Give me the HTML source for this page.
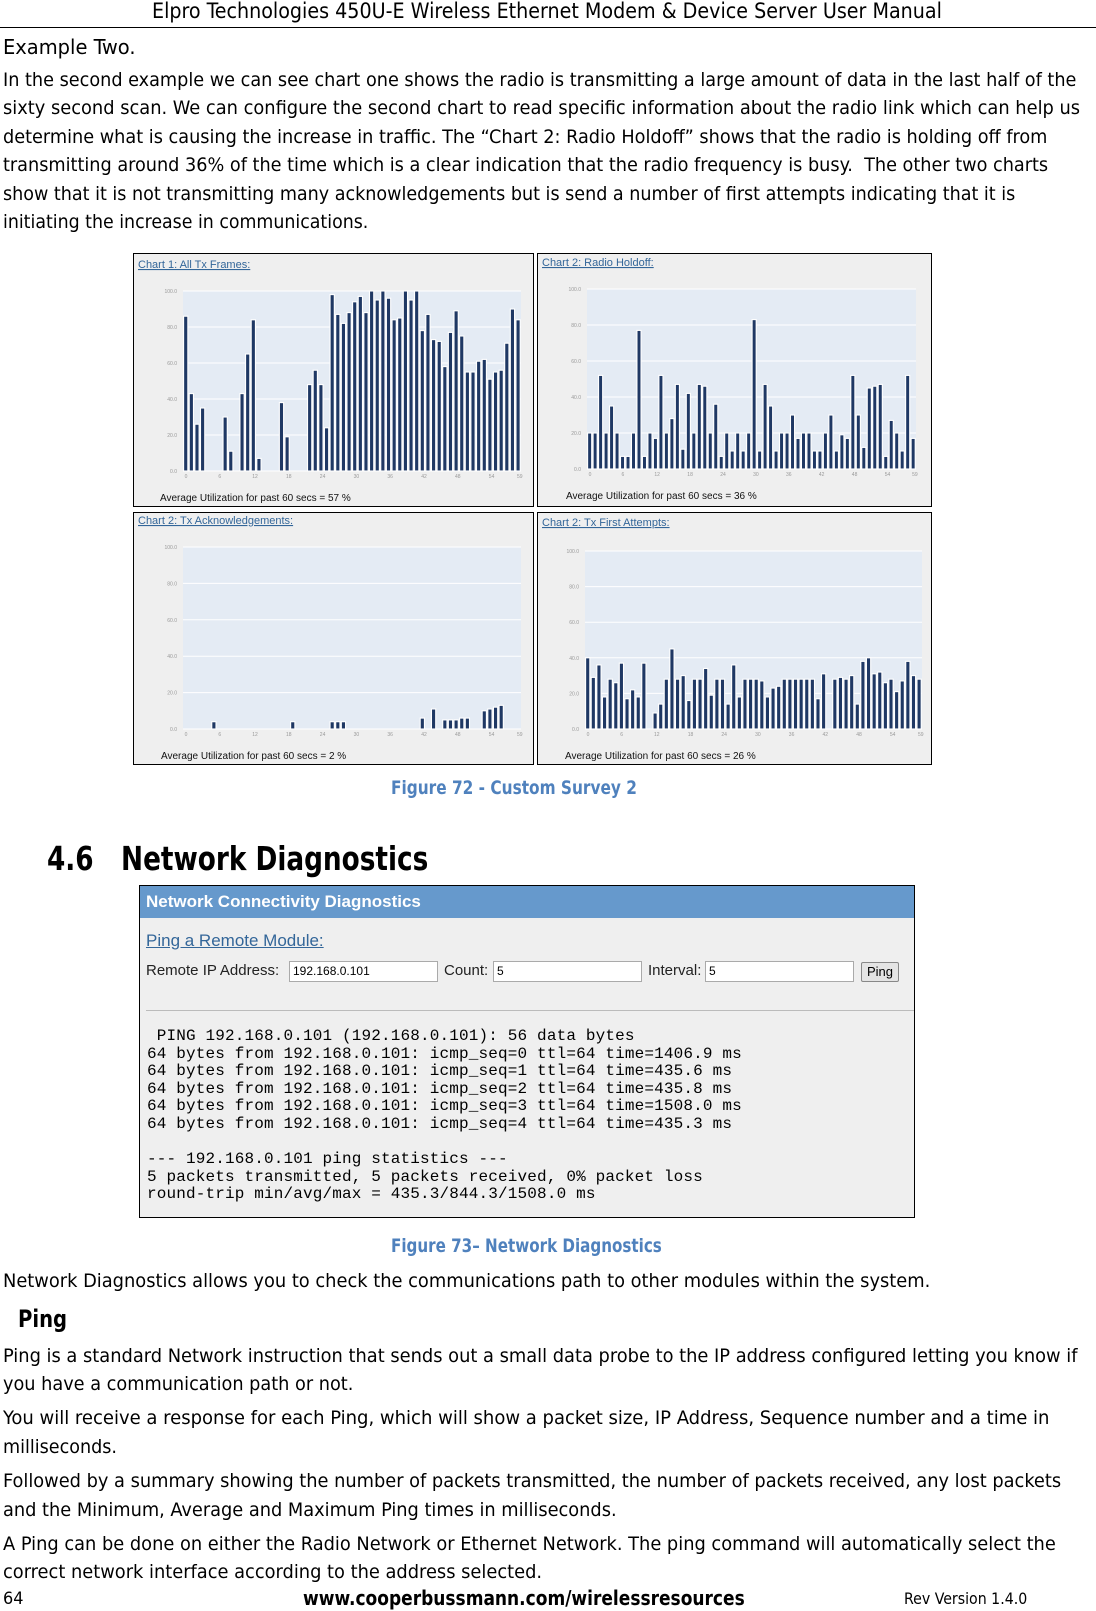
<!DOCTYPE html>
<html><head><meta charset="utf-8">
<style>
*{margin:0;padding:0;box-sizing:border-box}
html,body{width:1096px;height:1611px;background:#fff;overflow:hidden;position:relative;font-family:"DejaVu Sans Condensed","Liberation Sans Narrow","Liberation Sans",sans-serif;color:#000}
.a{position:absolute;white-space:nowrap}
.fit{position:absolute;white-space:nowrap;transform-origin:0 50%}
.body{font-size:19px;line-height:22px}
.cap{color:#4f81bd;font-weight:bold;font-size:19px}
.chart{position:absolute;border:1px solid #000;background:#efefef}
.mono{font-family:"Liberation Mono",monospace;font-size:16px;line-height:17.6px;white-space:pre;position:absolute;left:7px;color:#000;letter-spacing:0.15px}
.inp{position:absolute;height:21px;border:1px solid #aaa;background:#fff;font-family:"Liberation Sans Narrow","Liberation Sans",sans-serif;font-size:12px;padding:2px 3px}
.lab{position:absolute;font-family:"Liberation Sans Narrow","Liberation Sans",sans-serif;font-size:15px;color:#222}
</style></head><body>
<div class="fit" id="hdr" style="left:152px;top:0;font-size:21px;line-height:22px" data-w="790">Elpro Technologies 450U-E Wireless Ethernet Modem &amp; Device Server User Manual</div>
<div class="a" style="left:0;top:27px;width:1096px;height:1px;background:#000"></div>
<div class="fit" style="left:3px;top:35px;font-size:20px;line-height:24px" data-w="133">Example Two.</div>

<div class="fit body" style="left:3px;top:69px" data-w="1073">In the second example we can see chart one shows the radio is transmitting a large amount of data in the last half of the</div>
<div class="fit body" style="left:3px;top:97px" data-w="1077">sixty second scan. We can configure the second chart to read specific information about the radio link which can help us</div>
<div class="fit body" style="left:3px;top:126px" data-w="1044">determine what is causing the increase in traffic. The “Chart 2: Radio Holdoff” shows that the radio is holding off from</div>
<div class="fit body" style="left:3px;top:154px" data-w="1045">transmitting around 36% of the time which is a clear indication that the radio frequency is busy.&nbsp; The other two charts</div>
<div class="fit body" style="left:3px;top:183px" data-w="1012">show that it is not transmitting many acknowledgements but is send a number of first attempts indicating that it is</div>
<div class="fit body" style="left:3px;top:211px" data-w="365">initiating the increase in communications.</div>

<div id="charts"></div>

<div class="fit cap" style="left:391px;top:777px" data-w="246">Figure 72 - Custom Survey 2</div>

<div class="fit" style="left:47px;top:840px;font-size:33px;font-weight:bold;line-height:38px" data-w="381">4.6&nbsp;&nbsp; Network Diagnostics</div>

<div class="a" style="left:139px;top:885px;width:776px;height:333px;border:1px solid #000;background:#efefef">
  <div class="a" style="left:0;top:0;width:774px;height:32px;background:#6699cc"></div>
  <div class="a" style="left:6px;top:6px;color:#fff;font-family:'Liberation Sans',sans-serif;font-weight:bold;font-size:17px">Network Connectivity Diagnostics</div>
  <div class="a" style="left:6px;top:45px;color:#336699;text-decoration:underline;font-family:'Liberation Sans Narrow','Liberation Sans',sans-serif;font-size:17px">Ping a Remote Module:</div>
  <div class="lab" style="left:6px;top:76px">Remote IP Address:</div>
  <div class="inp" style="left:149px;top:75px;width:149px">192.168.0.101</div>
  <div class="lab" style="left:304px;top:76px">Count:</div>
  <div class="inp" style="left:353px;top:75px;width:149px">5</div>
  <div class="lab" style="left:508px;top:76px">Interval:</div>
  <div class="inp" style="left:565px;top:75px;width:149px">5</div>
  <div class="a" style="left:721px;top:76px;width:38px;height:20px;border:1px solid #888;border-radius:2px;background:#e4e4e4;font-family:'Liberation Sans Narrow','Liberation Sans',sans-serif;font-size:13px;text-align:center;line-height:18px">Ping</div>
  <div class="a" style="left:6px;top:124px;width:768px;height:1px;background:#bbb"></div>
  <div class="mono" style="top:142px"> PING 192.168.0.101 (192.168.0.101): 56 data bytes
64 bytes from 192.168.0.101: icmp_seq=0 ttl=64 time=1406.9 ms
64 bytes from 192.168.0.101: icmp_seq=1 ttl=64 time=435.6 ms
64 bytes from 192.168.0.101: icmp_seq=2 ttl=64 time=435.8 ms
64 bytes from 192.168.0.101: icmp_seq=3 ttl=64 time=1508.0 ms
64 bytes from 192.168.0.101: icmp_seq=4 ttl=64 time=435.3 ms

--- 192.168.0.101 ping statistics ---
5 packets transmitted, 5 packets received, 0% packet loss
round-trip min/avg/max = 435.3/844.3/1508.0 ms</div>
</div>

<div class="fit cap" style="left:391px;top:1235px" data-w="271">Figure 73– Network Diagnostics</div>
<div class="fit body" style="left:3px;top:1270px" data-w="927">Network Diagnostics allows you to check the communications path to other modules within the system.</div>
<div class="fit" style="left:18px;top:1305px;font-size:24px;font-weight:bold;line-height:28px" data-w="49">Ping</div>
<div class="fit body" style="left:3px;top:1345px" data-w="1075">Ping is a standard Network instruction that sends out a small data probe to the IP address configured letting you know if</div>
<div class="fit body" style="left:3px;top:1373px" data-w="350">you have a communication path or not.</div>
<div class="fit body" style="left:3px;top:1407px" data-w="1047">You will receive a response for each Ping, which will show a packet size, IP Address, Sequence number and a time in</div>
<div class="fit body" style="left:3px;top:1436px" data-w="114">milliseconds.</div>
<div class="fit body" style="left:3px;top:1470px" data-w="1058">Followed by a summary showing the number of packets transmitted, the number of packets received, any lost packets</div>
<div class="fit body" style="left:3px;top:1499px" data-w="614">and the Minimum, Average and Maximum Ping times in milliseconds.</div>
<div class="fit body" style="left:3px;top:1533px" data-w="1053">A Ping can be done on either the Radio Network or Ethernet Network. The ping command will automatically select the</div>
<div class="fit body" style="left:3px;top:1561px" data-w="539">correct network interface according to the address selected.</div>
<div class="fit" style="left:3px;top:1589px;font-size:17px;line-height:20px" data-w="20">64</div>
<div class="fit" style="left:303px;top:1587px;font-size:20px;font-weight:bold;line-height:22px" data-w="442">www.cooperbussmann.com/wirelessresources</div>
<div class="fit" style="left:904px;top:1589px;font-size:16px;line-height:20px" data-w="123">Rev Version 1.4.0</div>

<script>
var C=[
{b:[133,253,401,254],t:"Chart 1: All Tx Frames:",ty:260,p:[183,291,338,180],avg:"Average Utilization for past 60 secs = 57 %",ay:491,ax:160,
v:[86,43,26,35,0,0,0,30,11,0,43,65,84,7,0,0,0,38,19,0,0,0,48,56,48,24,98,87,82,88,94,97,88,100,95,100,96,84,85,100,95,100,78,87,73,72,58,77,89,75,55,55,61,62,51,55,56,71,90,84]},
{b:[537,253,395,254],t:"Chart 2: Radio Holdoff:",ty:258,p:[587,289,329,180],avg:"Average Utilization for past 60 secs = 36 %",ay:489,ax:566,
v:[20,20,52,20,35,20,7,7,20,77,7,20,17,52,20,28,47,11,42,20,47,46,20,36,7,20,10,20,10,20,83,10,47,35,10,20,20,30,17,20,20,10,10,20,30,10,19,17,52,30,12,45,46,47,7,27,20,10,52,17]},
{b:[133,512,401,253],t:"Chart 2: Tx Acknowledgements:",ty:516,p:[183,547,338,182],avg:"Average Utilization for past 60 secs = 2 %",ay:749,ax:161,
v:[0,0,0,0,0,4,0,0,0,0,0,0,0,0,0,0,0,0,0,4,0,0,0,0,0,0,4,4,4,0,0,0,0,0,0,0,0,0,0,0,0,0,6,0,11,0,5,5,5,6,6,0,0,10,11,12,13,0,0,0]},
{b:[537,512,395,253],t:"Chart 2: Tx First Attempts:",ty:518,p:[585,551,337,178],avg:"Average Utilization for past 60 secs = 26 %",ay:749,ax:565,
v:[40,29,36,18,28,26,37,17,22,18,37,0,9,14,28,45,28,30,16,28,28,34,19,28,28,14,36,18,28,28,28,27,18,23,24,28,28,28,28,28,28,17,31,0,28,29,28,30,14,38,40,31,32,26,28,21,27,38,30,28]}
];
var h='';
C.forEach(function(c){
 var b=c.b,p=c.p;
 h+='<div class="chart" style="left:'+b[0]+'px;top:'+b[1]+'px;width:'+b[2]+'px;height:'+b[3]+'px"></div>';
 var s='<svg class="a" style="left:0;top:0" width="1096" height="1611" viewBox="0 0 1096 1611" xmlns="http://www.w3.org/2000/svg">';
 s+='<text x="'+(b[0]+5)+'" y="'+(c.ty+8)+'" font-family="Liberation Sans,sans-serif" font-size="11" fill="#336699" text-decoration="underline">'+c.t+'</text>';
 s+='<rect x="'+p[0]+'" y="'+p[1]+'" width="'+p[2]+'" height="'+p[3]+'" fill="#e4ebf4"/>';
 for(var i=0;i<=5;i++){var yy=p[1]+p[3]*i/5;s+='<line x1="'+p[0]+'" x2="'+(p[0]+p[2])+'" y1="'+yy+'" y2="'+yy+'" stroke="#fff" stroke-width="1"/>';
  s+='<text x="'+(p[0]-6)+'" y="'+(yy+2)+'" font-family="Liberation Sans,sans-serif" font-size="5" fill="#999" text-anchor="end">'+((100-20*i).toFixed(1))+'</text>';}
 var bw=p[2]/60;
 for(var i=0;i<60;i++){var v=c.v[i];var x=p[0]+i*bw+0.6;
  if(i%6==0||i==59)s+='<text x="'+(x+1)+'" y="'+(p[1]+p[3]+7)+'" font-family="Liberation Sans,sans-serif" font-size="5" fill="#999">'+(i==59?59:i)+'</text>';
  if(v<=0)continue;var hh=p[3]*v/100;
  s+='<rect x="'+x+'" y="'+(p[1]+p[3]-hh)+'" width="'+(bw-1.4)+'" height="'+hh+'" fill="#1f3864" stroke="#fff" stroke-width="1.1"/>';}
 s+='<text x="'+c.ax+'" y="'+(c.ay+10)+'" font-family="Liberation Sans,sans-serif" font-size="10" fill="#111">'+c.avg+'</text></svg>';
 h+=s;
});
document.getElementById('charts').innerHTML=h;
document.querySelectorAll('.fit').forEach(function(e){var w=+e.getAttribute('data-w');var cw=e.scrollWidth;if(w&&cw)e.style.transform='scaleX('+(w/cw)+')';});
</script>
</body></html>
